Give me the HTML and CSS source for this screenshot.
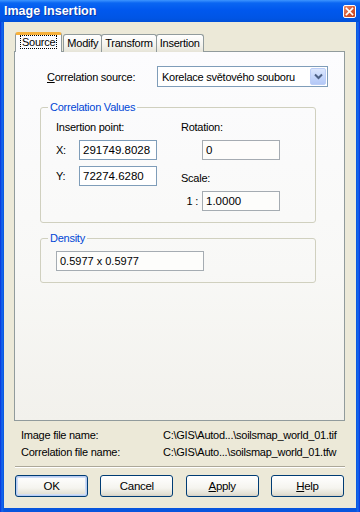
FILE: index.html
```html
<!DOCTYPE html>
<html lang="en">
<head>
    <meta charset="UTF-8">
    <meta name="viewport" content="width=device-width, initial-scale=1.0">
    <title>Image Insertion</title>
    <link rel="stylesheet" href="styles.css">
</head>
<body>
<div class="window">
    <div class="titlebar">
        <span class="title">Image Insertion</span>
        <span class="close-btn">
            <svg width="13" height="13" viewBox="0 0 13 13"><path d="M3.5 3.5 L9.5 9.5 M9.5 3.5 L3.5 9.5" stroke="#fff" stroke-width="1.7" stroke-linecap="square"/></svg>
        </span>
    </div>

    <div class="client">
        <div class="tabs">
            <div class="tab active"><span class="focus">Source</span></div>
            <div class="tab">Modify</div>
            <div class="tab">Transform</div>
            <div class="tab">Insertion</div>
        </div>

        <div class="panel">
            <div class="source-row">
                <span class="source-label"><u>C</u>orrelation source:</span>
                <div class="combo">
                    <span class="combo-text">Korelace světového souboru</span>
                    <span class="combo-btn">
                        <svg width="9" height="7" viewBox="0 0 9 7"><path d="M1 1.5 L4.5 5 L8 1.5" fill="none" stroke="#4d6185" stroke-width="2"/></svg>
                    </span>
                </div>
            </div>

            <fieldset class="group values">
                <legend>Correlation Values</legend>
                <div class="cols">
                    <div class="col-left">
                        <div class="lbl">Insertion point:</div>
                        <div class="field-row"><span class="axis">X:</span><div class="input">291749.8028</div></div>
                        <div class="field-row"><span class="axis">Y:</span><div class="input">72274.6280</div></div>
                    </div>
                    <div class="col-right">
                        <div class="lbl">Rotation:</div>
                        <div class="field-row indent"><div class="input grey">0</div></div>
                        <div class="lbl scale-lbl">Scale:</div>
                        <div class="field-row"><span class="ratio">1 :</span><div class="input grey">1.0000</div></div>
                    </div>
                </div>
            </fieldset>

            <fieldset class="group density">
                <legend>Density</legend>
                <div class="input grey wide">0.5977 x 0.5977</div>
            </fieldset>
        </div>

        <div class="files">
            <span>Image file name:</span>
            <span>C:\GIS\Autod...\soilsmap_world_01.tif</span>
            <span>Correlation file name:</span>
            <span>C:\GIS\Auto...\soilsmap_world_01.tfw</span>
        </div>

        <div class="separator"></div>

        <div class="buttons">
            <button class="btn default">OK</button>
            <button class="btn">Cancel</button>
            <button class="btn"><u>A</u>pply</button>
            <button class="btn"><u>H</u>elp</button>
        </div>
    </div>
</div>
</body>
</html>
```

FILE: styles.css
```css
* {
    box-sizing: border-box;
}
body {
    margin: 0;
    font-family: "Liberation Sans", Arial, sans-serif;
    font-size: 11px;
    letter-spacing: -0.25px;
    color: #000;
}
.window {
    width: 360px;
    height: 512px;
    background: linear-gradient(to right, #0831d9 0, #166aee 2px, #0855dd 4px, #0855dd 356px, #166aee 358px, #0831d9 360px);
    display: flex;
    flex-direction: column;
}
.titlebar {
    height: 22px;
    display: flex;
    align-items: center;
    justify-content: space-between;
    padding: 0 4px 0 4px;
    background: linear-gradient(#3d95ff 0, #0a66f2 3px, #0058ee 10px, #0055e5 18px, #004fd8 22px);
}
.title {
    color: #fff;
    font-weight: bold;
    font-size: 12.5px;
    letter-spacing: 0;
    text-shadow: 1px 1px 0 #0a3aa8;
}
.close-btn {
    width: 13px;
    height: 13px;
    border: 1px solid #fff;
    border-radius: 2px;
    background: linear-gradient(135deg, #e88b6c, #d4552f 60%, #c24421);
    display: flex;
    align-items: center;
    justify-content: center;
}
.close-btn svg {
    display: block;
    margin: -1px;
}
.client {
    flex: 1;
    margin: 0 4px 4px 4px;
    background-color: #ece9d8;
    padding-top: 10px;
}
.tabs {
    display: flex;
    align-items: flex-end;
    margin-left: 11px;
    height: 20px;
    position: relative;
    z-index: 1;
}
.tab {
    height: 18px;
    padding: 0 3px;
    text-align: center;
    line-height: 16px;
    border: 1px solid #919b9c;
    border-bottom: none;
    border-radius: 3px 3px 0 0;
    background: linear-gradient(#ffffff, #f4f3ee 60%, #e6e4d8);
    margin-left: -1px;
}
.tab:first-child {
    margin-left: 0;
}
.tab.active {
    height: 20px;
    padding: 0 5px;
    margin-right: 1px;
    background: #fcfcfe;
    border-top: 3px solid #f7b03a;
    line-height: 15px;
}
.tab.active + .tab {
    margin-left: 0;
}
.focus {
    outline: 1px dotted #000;
    padding: 0 1px;
}
.panel {
    width: 331px;
    height: 370px;
    margin-left: 10px;
    margin-top: -1px;
    border: 1px solid #919b9c;
    background: linear-gradient(#fcfcfe, #f8f8f6 60%, #f2f1ec);
    padding-top: 14px;
}
.source-row {
    display: flex;
    align-items: center;
    padding-left: 32px;
}
.source-label {
    width: 110px;
}
.combo {
    width: 171px;
    height: 21px;
    border: 1px solid #7f9db9;
    background: #fff;
    display: flex;
    align-items: center;
    justify-content: space-between;
    padding: 1px;
}
.combo-text {
    padding-left: 3px;
}
.combo-btn {
    width: 16px;
    height: 17px;
    border-radius: 2px;
    background: linear-gradient(#dce7fd, #c2d4fb 60%, #b4c8f6);
    border: 1px solid #bccef7;
    display: flex;
    align-items: center;
    justify-content: center;
}
.group {
    margin: 0 0 0 25px;
    width: 276px;
    border: 1px solid #d0d0bf;
    border-radius: 3px;
    padding: 0 0 0 15px;
}
.group legend {
    color: #0046d5;
    padding: 0 2px;
    margin-left: -8px;
    line-height: 13px;
}
.values {
    margin-top: 14px;
    padding-top: 7px;
    padding-bottom: 11px;
}
.density {
    margin-top: 9px;
    padding-top: 6px;
    padding-bottom: 11px;
}
.cols {
    display: flex;
}
.col-left {
    width: 125px;
}
.lbl {
    line-height: 13px;
}
.field-row {
    display: flex;
    align-items: center;
    margin-top: 6px;
}
.indent {
    padding-left: 21px;
}
.scale-lbl {
    margin-top: 12px;
}
.axis {
    width: 23px;
}
.ratio {
    width: 21px;
    text-align: right;
    padding-right: 4px;
}
.input {
    width: 78px;
    height: 20px;
    line-height: 18px;
    border: 1px solid #7f9db9;
    background: #fff;
    padding-left: 3px;
    font-size: 11.5px;
    letter-spacing: 0;
}
.input.grey {
    border-color: #a5acb2;
    background: #fdfdfb;
}
.input.wide {
    width: 148px;
    font-size: 11px;
}
.files {
    display: grid;
    grid-template-columns: 142px 1fr;
    margin-top: 6px;
    padding-left: 17px;
    line-height: 17px;
    color: #000;
}
.separator {
    margin: 5px 11px 0 11px;
    height: 2px;
    border-top: 1px solid #aca899;
    border-bottom: 1px solid #fff;
}
.buttons {
    display: flex;
    justify-content: space-between;
    margin: 7px 12px 0 11px;
}
.btn {
    width: 73px;
    height: 22px;
    padding: 0;
    font-family: inherit;
    font-size: 11.5px;
    letter-spacing: -0.3px;
    color: #000;
    border: 1px solid #003c74;
    border-radius: 3px;
    background: linear-gradient(#ffffff, #f5f4ef 60%, #e3e0d4 90%, #d6d0c5);
}
.btn.default {
    box-shadow: inset 0 0 0 1px #b7ccf2, inset 0 0 0 2px #cfdcf5;
}
```
